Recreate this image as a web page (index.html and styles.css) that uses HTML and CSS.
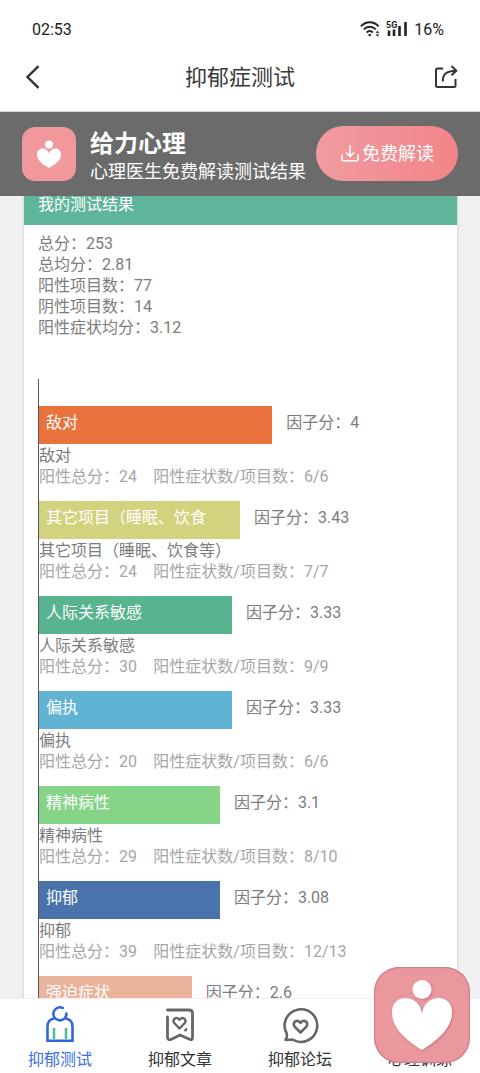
FILE: index.html
```html
<!DOCTYPE html>
<html lang="zh-CN">
<head>
  <meta charset="UTF-8">
  <meta name="viewport" content="width=device-width, initial-scale=1.0">
  <title>抑郁症测试</title>
  <link rel="stylesheet" href="styles.css">
</head>
<body>

  <div class="status-bar">
    <span>02:53</span>
    <div class="status-icons">
      <svg width="20" height="16" viewBox="0 0 20 16" fill="none" stroke="#222" stroke-width="2">
        <path d="M1 5.2C6-0.2 13.500-.2 18.500 5.200"/>
        <path d="M3.800 8.400C7.300 4.800 12.200 4.800 15.700 8.400"/>
        <path d="M6.700 11.400C8.600 9.600 10.900 9.600 12.800 11.400"/>
        <circle cx="9.700" cy="14" r="1.300" fill="#222" stroke="none"/>
        <path d="M15.500 12l2-2.500 2 2.500zM15.500 13.200l2 2.500 2-2.500z" fill="#444" stroke="none"/>
      </svg>
      <svg width="22" height="16" viewBox="0 0 22 16">
        <text x="0" y="7" class="signal-text">5G</text>
        <path d="M3 9.500v5.500M8 8.500v6.500M13.500 5v10M19.500 1v14" stroke="#222" stroke-width="2.600"/>
      </svg>
      <span>16%</span>
    </div>
  </div>

  <header class="top-bar">
    <button class="icon-btn" aria-label="返回">
      <svg width="24" height="24" viewBox="0 0 24 24" fill="none" stroke="#333" stroke-width="2.400">
        <path d="M16.500 1.200L5.500 12l11 10.800"/>
      </svg>
    </button>
    <h1>抑郁症测试</h1>
    <button class="icon-btn" aria-label="分享">
      <svg width="24" height="24" viewBox="0 0 24 24" fill="none" stroke="#333" stroke-width="2">
        <path d="M9.200 3.500H3.500Q2 3.500 2 5v15.500Q2 22 3.500 22H20q1.500 0 1.500-1.500V14"/>
        <path d="M8.800 16.500C8.800 9.500 12 6 22 5.700M17.500 1l4.800 4.700-4.800 4.600"/>
      </svg>
    </button>
  </header>

  <div class="banner">
    <svg width="54" height="54" viewBox="0 0 54 54">
      <rect width="54" height="54" rx="13" fill="#f1989d"/>
      <circle cx="27" cy="17.500" r="4" fill="#fff"/>
      <path d="M27 41C20 37 15 33 15 27.500C15 24 17.500 21.500 20.500 21.500C23.500 21.500 26.500 23.500 27 27C27.500 23.500 30.500 21.500 33.500 21.500C36.500 21.500 39 24 39 27.500C39 33 34 37 27 41Z" fill="#fff"/>
    </svg>
    <div class="banner-text">
      <h2>给力心理</h2>
      <p>心理医生免费解读测试结果</p>
    </div>
    <button class="banner-btn">
      <svg width="20" height="20" viewBox="0 0 20 20" fill="none" stroke="#fff" stroke-width="1.600">
        <path d="M10 2v11M6 9.500l4 4 4-4M2 11.500v5q0 1.200 1.200 1.200h13.600q1.200 0 1.200-1.200v-5"/>
      </svg>
      免费解读
    </button>
  </div>

  <main>
    <section class="card">
      <h2 class="card-title">我的测试结果</h2>
      <div class="card-body">
        <div class="summary">
          <p>总分：253</p>
          <p>总均分：2.81</p>
          <p>阳性项目数：77</p>
          <p>阴性项目数：14</p>
          <p>阳性症状均分：3.12</p>
        </div>

        <div class="chart">
          <div class="factor">
            <div class="row">
              <div class="bar orange" style="width: 58%">敌对</div>
              <span class="score">因子分：4</span>
            </div>
            <p>敌对</p>
            <p class="detail">阳性总分：24&emsp;阳性症状数/项目数：6/6</p>
          </div>
          <div class="factor">
            <div class="row">
              <div class="bar yellow" style="width: 50%">其它项目（睡眠、饮食</div>
              <span class="score">因子分：3.43</span>
            </div>
            <p>其它项目（睡眠、饮食等）</p>
            <p class="detail">阳性总分：24&emsp;阳性症状数/项目数：7/7</p>
          </div>
          <div class="factor">
            <div class="row">
              <div class="bar green" style="width: 48%">人际关系敏感</div>
              <span class="score">因子分：3.33</span>
            </div>
            <p>人际关系敏感</p>
            <p class="detail">阳性总分：30&emsp;阳性症状数/项目数：9/9</p>
          </div>
          <div class="factor">
            <div class="row">
              <div class="bar sky" style="width: 48%">偏执</div>
              <span class="score">因子分：3.33</span>
            </div>
            <p>偏执</p>
            <p class="detail">阳性总分：20&emsp;阳性症状数/项目数：6/6</p>
          </div>
          <div class="factor">
            <div class="row">
              <div class="bar lime" style="width: 45%">精神病性</div>
              <span class="score">因子分：3.1</span>
            </div>
            <p>精神病性</p>
            <p class="detail">阳性总分：29&emsp;阳性症状数/项目数：8/10</p>
          </div>
          <div class="factor">
            <div class="row">
              <div class="bar blue" style="width: 45%">抑郁</div>
              <span class="score">因子分：3.08</span>
            </div>
            <p>抑郁</p>
            <p class="detail">阳性总分：39&emsp;阳性症状数/项目数：12/13</p>
          </div>
          <div class="factor">
            <div class="row">
              <div class="bar peach" style="width: 38%">强迫症状</div>
              <span class="score">因子分：2.6</span>
            </div>
          </div>
        </div>
      </div>
    </section>
  </main>

  <nav class="tab-bar">
    <a href="#" class="active">
      <svg width="40" height="40" viewBox="0 0 40 40" fill="none" stroke="#2f66e0" stroke-width="2.600">
        <path d="M22.800 3A6.500 6.500 0 1 0 26.400 8.500" stroke-linecap="round"/>
        <path d="M14.500 13.500Q7.500 14.500 7.500 21.500V35.700H32.500V21.500Q32.500 14.500 25.500 13.500"/>
        <path d="M14 23v11M26 23v11" stroke="#56bb9b"/>
      </svg>
      抑郁测试
    </a>
    <a href="#">
      <svg width="40" height="40" viewBox="0 0 40 40" fill="none" stroke="#666" stroke-width="2.800" stroke-linecap="round" stroke-linejoin="round">
        <path d="M7.500 5H29q3.500 0 3.500 3.500V32.500Q32.500 35.500 29.500 34.200L20 30l-8.500 4.200Q7.500 35.800 7.500 32V12"/>
        <path d="M19.500 23.500L14.200 18C12 14.500 16 11 19.500 14.800C23 11 27 14.500 24.800 18Z" stroke-width="2.400"/>
        <path d="M24.500 25.500h2v-2z" stroke-width="1.400"/>
      </svg>
      抑郁文章
    </a>
    <a href="#">
      <svg width="40" height="40" viewBox="0 0 40 40" fill="none" stroke="#666" stroke-width="2.600" stroke-linejoin="round">
        <path d="M6.700 28.500A16.300 16.300 0 1 1 12.500 34.500Q9 35 5.500 34.800Q7.500 32 6.700 28.500Z"/>
        <path d="M20.500 27.500L14.800 21.800C11.500 17.500 16.800 13.500 20.500 17.800C24.200 13.500 29.500 17.500 26.200 21.800Z"/>
      </svg>
      抑郁论坛
    </a>
    <a href="#">
      <svg width="40" height="40" viewBox="0 0 40 40"></svg>
      心理训练
    </a>
  </nav>

  <button class="float-btn" aria-label="给力心理">
    <svg width="96" height="96" viewBox="0 0 96 96">
      <path class="float-mark" d="M48 83C30 72 18 60 18 45C18 36 24 31 31 31C40 31 47 37 48 47C49 37 56 31 65 31C72 31 78 36 78 45C78 60 66 72 48 83Z" fill="#fff"/>
      <circle class="float-mark" cx="48" cy="22.500" r="9.500" fill="#fff"/>
    </svg>
  </button>

</body>
</html>
```
FILE: styles.css
```css
* {
  margin: 0;
  padding: 0;
  box-sizing: border-box;
}

body {
  display: flex;
  flex-direction: column;
  height: 100vh;
  overflow: hidden;
  font-family: Roboto, "Noto Sans CJK SC", sans-serif;
  font-size: 16px;
  line-height: 21px;
  color: #7c7c7c;
  background-color: #f0f0f3;
}

button {
  border: none;
  background: none;
  font: inherit;
  cursor: pointer;
}

svg {
  display: block;
}

.status-bar {
  display: flex;
  align-items: center;
  justify-content: space-between;
  height: 49px;
  padding: 9px 36px 0 32px;
  background-color: #fff;
  color: #222;
}

.status-icons {
  display: flex;
  align-items: center;
  gap: 6px;
}

.signal-text {
  font-size: 9px;
  font-weight: 700;
  fill: #222;
}

.top-bar {
  display: flex;
  align-items: center;
  justify-content: space-between;
  height: 63px;
  padding: 0 22px 6px 22px;
  background-color: #fff;
  border-bottom: 1px solid #d5d5d5;
}

.top-bar h1 {
  padding-top: 2px;
  font-size: 22px;
  font-weight: 400;
  line-height: 30px;
  color: #3a3a3a;
}

.banner {
  position: relative;
  z-index: 1;
  display: flex;
  align-items: center;
  height: 84px;
  padding: 0 22px;
  background-color: #6b6b6b;
  color: #fff;
}

.banner-text {
  flex: 1;
  margin-left: 14px;
  padding-top: 6px;
  white-space: nowrap;
}

.banner-text h2 {
  font-size: 24px;
  font-weight: 700;
  line-height: 30px;
}

.banner-text p {
  font-size: 18px;
  line-height: 26px;
}

.banner-btn {
  display: flex;
  align-items: center;
  justify-content: center;
  gap: 2px;
  width: 142px;
  height: 55px;
  margin-bottom: 2px;
  border-radius: 28px;
  background: linear-gradient(to right, #f09ca1, #f28489);
  color: #fff;
  font-size: 18px;
}

main {
  flex: 1;
  min-height: 0;
  overflow: hidden;
}

/* the card starts scrolled a little under the banner */
.card {
  margin: -14px 23px 0 24px;
  background-color: #fff;
  box-shadow: 0 0 3px rgba(0, 0, 0, 0.2);
}

.card-title {
  padding: 12px 14px 10px;
  background-color: #5eb59b;
  color: #fff;
  font-size: 16px;
  font-weight: 400;
}

.card-body {
  padding: 8px 16px 8px 14px;
}

.chart {
  margin-top: 41px;
  padding-top: 27px;
  border-left: 1px solid #555;
}

.factor {
  margin-bottom: 14px;
}

.row {
  display: flex;
  margin-bottom: 1px;
}

.bar {
  flex: none;
  height: 38px;
  padding: 6px 7px;
  overflow: hidden;
  color: #fff;
}

.score {
  padding: 6px 14px;
}

.detail {
  color: #a6a6a6;
}

.orange { background-color: #ea733d; }
.yellow { background-color: #d3d37f; }
.green { background-color: #58b38f; }
.sky { background-color: #60b3d3; }
.lime { background-color: #85d488; }
.blue { background-color: #4a73ac; }
.peach { background-color: #eab39b; }

.tab-bar {
  display: flex;
  height: 75px;
  padding-top: 6px;
  background-color: #fff;
  border-top: 1px solid #eee;
}

.tab-bar a {
  flex: 1;
  display: flex;
  flex-direction: column;
  align-items: center;
  gap: 4px;
  color: #333;
  text-decoration: none;
}

.tab-bar a.active {
  color: #3b70e2;
}

.float-btn {
  position: fixed;
  right: 10px;
  bottom: 10px;
  z-index: 2;
  border-radius: 25px;
  background-color: #ea989d;
  box-shadow: inset 0 0 2px rgba(90, 30, 40, 0.7);
}

.float-mark {
  filter: drop-shadow(1px 1px 1px rgba(120, 50, 60, 0.3));
}
```
